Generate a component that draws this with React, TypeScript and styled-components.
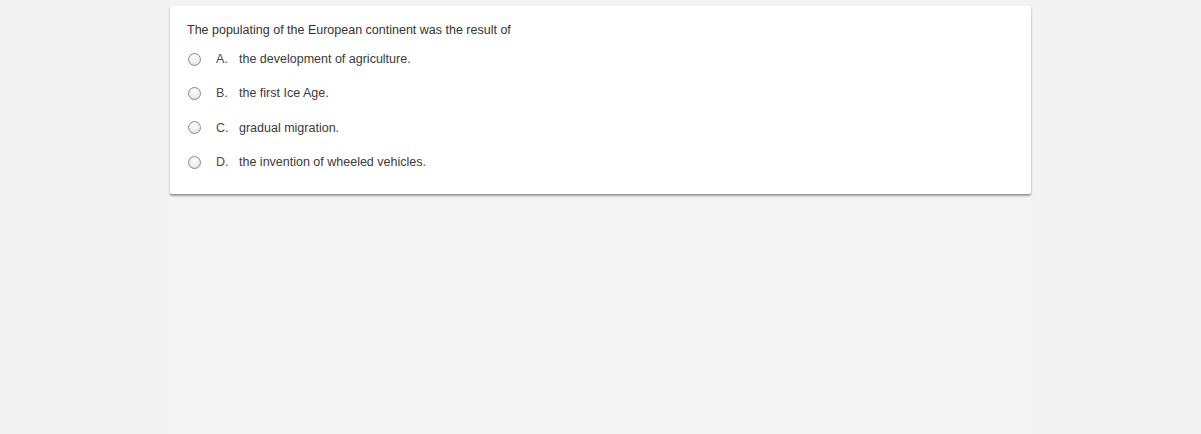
import styled, {createGlobalStyle} from "styled-components";

const options = [
    {letter: "A.", text: "the development of agriculture."},
    {letter: "B.", text: "the first Ice Age."},
    {letter: "C.", text: "gradual migration."},
    {letter: "D.", text: "the invention of wheeled vehicles."},
];

const GlobalStyle = createGlobalStyle`
    html, body {
        margin: 0;
        padding: 0;
        background: #f2f2f2;
        font-family: "Liberation Sans", Arial, sans-serif;
    }
`;

const App = () => {
    return (
        <>
            <GlobalStyle/>
            <Page>
                <Column>
                    <Card>
                        <Question>The populating of the European continent was the result of</Question>
                        <OptionList>
                            {
                                options.map((opt, index) => (
                                    <Option key={index}>
                                        <Radio/>
                                        <Letter>{opt.letter}</Letter>
                                        <OptionText>{opt.text}</OptionText>
                                    </Option>
                                ))
                            }
                        </OptionList>
                    </Card>
                    <Filler/>
                </Column>
            </Page>
        </>
    )
}

const Page = styled.div`
    width: 1201px;
    height: 434px;
    overflow: hidden;
    padding-left: 170px;
    padding-top: 6px;
    box-sizing: border-box;
`;

const Column = styled.div`
    width: 861px;
    display: flex;
    flex-direction: column;
    height: 100%;
`;

const Card = styled.div`
    background: #ffffff;
    height: 188px;
    box-sizing: border-box;
    padding: 15px 0 0 17px;
    border-radius: 2px;
    box-shadow: 0 1px 2px rgba(0, 0, 0, 0.12), 0 2px 2px rgba(0, 0, 0, 0.32);
`;

const Question = styled.div`
    font-size: 12.5px;
    line-height: 18px;
    color: #333333;
`;

const OptionList = styled.ul`
    list-style: none;
    margin: 3px 0 0 0;
    padding: 0;
    display: flex;
    flex-direction: column;
`;

const Option = styled.li`
    display: flex;
    align-items: center;
    height: 34.3px;
    font-size: 12.5px;
    color: #3a3a3a;
`;

const Radio = styled.span`
    width: 13px;
    height: 13px;
    margin-left: 1px;
    border-radius: 50%;
    border: 1px solid #8a8a8a;
    background: radial-gradient(circle at 50% 35%, #ffffff 0%, #ececec 60%, #d2d2d2 100%);
    box-sizing: border-box;
    flex-shrink: 0;
`;

const Letter = styled.span`
    margin-left: 15px;
    width: 23px;
    color: #4a4a4a;
`;

const OptionText = styled.span`
    color: #3a3a3a;
`;

const Filler = styled.div`
    flex: 1;
    margin-top: 4px;
    background: #f4f4f4;
`;

export default App;
